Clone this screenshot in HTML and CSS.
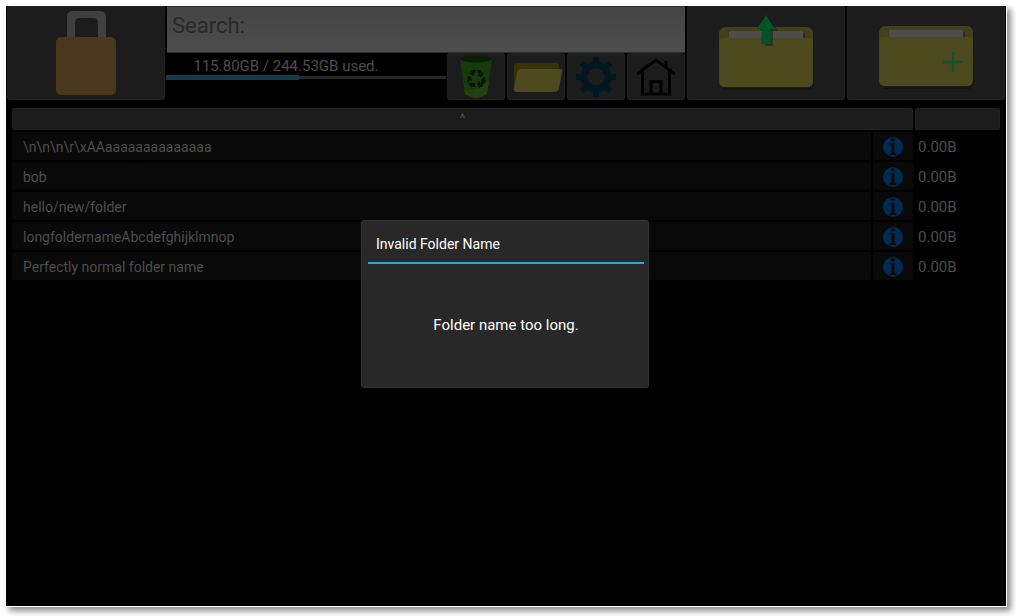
FILE: index.html
```html
<!DOCTYPE html>
<html lang="en">
<head>
<meta charset="utf-8">
<title>Folders</title>
<link rel="stylesheet" href="styles.css">
</head>
<body>
<svg class="defs" aria-hidden="true">
  <symbol id="info" viewBox="0 0 20 20">
    <circle cx="10" cy="10" r="10" fill="#002b52"/>
    <ellipse cx="9.800" cy="2.800" rx="2.200" ry="1.500" fill="#090909"/>
    <path d="M6.500 6H11.500V15.500Q11.500 16.500 13.500 16.500V18H6.500V16.500Q8.500 16.500 8.500 15.500V8.500Q8.500 7.500 6.500 7.500Z" fill="#090909"/>
  </symbol>
  <symbol id="folder" viewBox="0 0 100 66">
    <path d="M1 9Q1 1 8 1H89Q95 1 95 9V50H1Z" fill="#42401a"/>
    <path d="M11 5H85V18H11Z" fill="#4d4d4d"/>
    <path d="M85 7H87V13H85Z" fill="#302f17"/>
    <path d="M5 63H91Q96 61 96 55V20" fill="none" stroke="#151515" stroke-width="2"/>
    <path d="M1 17Q1 12 6 12H90Q95 12 95 17V55Q95 61 89 61H7Q1 61 1 55Z" fill="#4d491f"/>
  </symbol>
</svg>
<div class="window">
  <header class="toolbar">
    <button class="btn" aria-label="Lock">
      <svg width="60" height="86" viewBox="0 0 60 86">
        <path d="M11 30V7Q11 1 17 1H44Q50 1 50 7V30H42V13Q42 8 37 8H24Q19 8 19 13V30Z" fill="#404040"/>
        <rect y="27" width="60" height="58" rx="5" fill="#4b371c"/>
      </svg>
    </button>
    <div class="middle">
      <input class="search" type="text" placeholder="Search:" aria-label="Search">
      <div class="tools">
        <div class="usage">
          <span class="usage-text">115.80GB / 244.53GB used.</span>
          <div class="track"><div class="fill" style="width:47.4%"></div></div>
        </div>
        <button class="btn" aria-label="Recycle bin">
          <svg width="34" height="44" viewBox="0 0 34 44">
            <path d="M1 4L6 39Q17 46 28 39L33 4Z" fill="#173a0b"/>
            <path d="M5 35Q20 36 30 26L28 39Q17 46 6 39Z" fill="#21430f"/>
            <ellipse cx="17" cy="4" rx="16" ry="3.500" fill="#0a1e04"/>
            <g fill="#08130a">
              <path d="M13 15H17L14 21L10.500 19Z"/>
              <path d="M18 15H21L23 18L25 17L23 22L18 21L20 20Z"/>
              <path d="M22.500 24L26 22L27 26L25 28H22Z"/>
              <path d="M18 29L21 26V28H25L23 32H21V34Z"/>
              <path d="M11 28H16V32H12L10 30Z"/>
              <path d="M7 22L12 21L13 26L11.500 25L9.500 28L7.500 25L9 23Z"/>
            </g>
          </svg>
        </button>
        <button class="btn" aria-label="Open folder">
          <svg width="54" height="30" viewBox="-4 0 54 30">
            <path d="M1 4Q1 1 4 1H43Q46 1 46 4V24H1Z" fill="#353305"/>
            <path d="M4 10Q5 7 8 7H47Q50 7 49 10L46 26Q45 30 42 30H3Q0 30 1 26Z" fill="#4d4a1f"/>
          </svg>
        </button>
        <button class="btn" aria-label="Settings">
          <svg width="40" height="40" viewBox="-20 -20 40 40" fill="#021722">
            <g id="teeth">
              <path d="M-3-20H3V-12H-3ZM-3 20H3V12H-3ZM-20-3V3H-12V-3ZM20-3V3H12V-3Z"/>
            </g>
            <use href="#teeth" transform="rotate(45)"/>
            <circle r="12" fill="none" stroke="#021722" stroke-width="7"/>
          </svg>
        </button>
        <button class="btn" aria-label="Home">
          <svg width="40" height="38" viewBox="0 0 40 38" fill="none" stroke="#000" stroke-width="3">
            <path d="M1 16L20 2L39 16M30 9V3M6.500 13V36H33.500V13M15 36V23.500H25V36"/>
          </svg>
        </button>
      </div>
    </div>
    <button class="btn" aria-label="Parent folder">
      <svg width="96" height="78" viewBox="0 0 96 78">
        <use href="#folder" y="12" width="100" height="66"/>
        <path d="M50 3L60 17H55V32H47V17H42Z" fill="#171b12" opacity=".5"/>
        <path d="M48 1L57 15H52.500V30H43.500V15H39Z" fill="#005426"/>
      </svg>
    </button>
    <button class="btn" aria-label="New folder">
      <svg width="96" height="78" viewBox="0 0 96 78">
        <use href="#folder" y="11" width="100" height="66"/>
        <path d="M65 48H85M75 38V58" stroke="#15522c" stroke-width="2.400"/>
      </svg>
    </button>
  </header>
  <main class="content">
    <table class="files">
      <colgroup><col><col class="col-info"><col class="col-size"></colgroup>
      <thead>
        <tr><th colspan="2"><button class="btn sort">^</button></th><th><button class="btn sort" aria-label="Sort by size"></button></th></tr>
      </thead>
      <tbody>
        <tr><td><button class="row-btn name">\n\n\n\r\xAAaaaaaaaaaaaaaa</button></td><td><button class="row-btn" aria-label="Info"><svg width="20" height="20"><use href="#info"/></svg></button></td><td class="size">0.00B</td></tr>
        <tr><td><button class="row-btn name">bob</button></td><td><button class="row-btn" aria-label="Info"><svg width="20" height="20"><use href="#info"/></svg></button></td><td class="size">0.00B</td></tr>
        <tr><td><button class="row-btn name">hello/new/folder</button></td><td><button class="row-btn" aria-label="Info"><svg width="20" height="20"><use href="#info"/></svg></button></td><td class="size">0.00B</td></tr>
        <tr><td><button class="row-btn name">longfoldernameAbcdefghijklmnop</button></td><td><button class="row-btn" aria-label="Info"><svg width="20" height="20"><use href="#info"/></svg></button></td><td class="size">0.00B</td></tr>
        <tr><td><button class="row-btn name">Perfectly normal folder name</button></td><td><button class="row-btn" aria-label="Info"><svg width="20" height="20"><use href="#info"/></svg></button></td><td class="size">0.00B</td></tr>
      </tbody>
    </table>
  </main>
  <div class="overlay">
    <section class="popup" role="dialog" aria-labelledby="popup-title">
      <h1 class="popup-title" id="popup-title">Invalid Folder Name</h1>
      <p class="popup-text">Folder name too long.</p>
    </section>
  </div>
</div>
</body>
</html>
```
FILE: styles.css
```css
* {
  box-sizing: border-box;
}

body {
  margin: 0;
  padding: 5px 9px 9px 5px;
  min-height: 100vh;
  display: flex;
  background: #fff;
  font-family: Roboto, "Liberation Sans", sans-serif;
  font-size: 15px;
  color: #4d4d4d;
}

button,
input {
  font: inherit;
  color: inherit;
  margin: 0;
  padding: 0;
  border: 0;
}

svg {
  display: block;
}

.defs {
  position: absolute;
  width: 0;
  height: 0;
}

.window {
  position: relative;
  flex: 1;
  border: 1px solid #fff;
  background: #000 padding-box;
  box-shadow: 4px 4px 6px rgba(0, 0, 0, 0.45);
}

.btn {
  display: flex;
  align-items: center;
  justify-content: center;
  background: #1c1c1c;
  border: 1px solid #202020;
  border-radius: 2px;
}

.toolbar {
  display: grid;
  grid-template-columns: 158px 1fr 158px 158px;
  gap: 2px;
  height: 94px;
  padding: 0 1px;
}

.middle {
  display: flex;
  flex-direction: column;
}

.search {
  width: 100%;
  height: 47px;
  padding: 0 5px 8px;
  border: solid #2e2e2e;
  border-width: 1px 0;
  background: linear-gradient(#444, #4d4d4d);
  font-size: 22px;
}

.search::placeholder {
  color: #292929;
  opacity: 1;
}

.tools {
  flex: 1;
  display: grid;
  grid-template-columns: 1fr repeat(4, 58px);
  gap: 2px;
}

.usage {
  display: flex;
  flex-direction: column;
  margin: 0 -1px;
  padding-top: 4px;
}

.usage-text {
  padding-right: 40px;
  line-height: 18px;
  text-align: center;
}

.track {
  display: flex;
  align-items: center;
  height: 5px;
  background: linear-gradient(#292929, #292929) center / 100% 3px no-repeat;
}

.fill {
  height: 5px;
  background: #123c4d;
}

.content {
  padding: 7px 5px;
}

.files {
  width: 100%;
  table-layout: fixed;
  border-collapse: collapse;
}

.files th,
.files td {
  padding: 1px;
}

.col-info {
  width: 42px;
}

.col-size {
  width: 87px;
}

.sort {
  width: 100%;
  height: 22px;
  font-size: 12px;
}

.row-btn {
  display: flex;
  align-items: center;
  justify-content: center;
  width: 100%;
  height: 28px;
  padding-top: 2px;
  background: #090909;
  border-radius: 2px;
}

.name {
  justify-content: flex-start;
  padding-left: 11px;
  font-size: 14px;
}

.files .size {
  padding: 3px 0 1px 4px;
}

.overlay {
  position: absolute;
  inset: 0;
  display: flex;
  align-items: center;
  justify-content: center;
  padding: 0 2px 4px 0;
}

.popup {
  width: 288px;
  height: 168px;
  padding: 6px 4px 2px 6px;
  display: flex;
  flex-direction: column;
  background: #282828;
  border: 1px solid #333;
  border-radius: 3px;
  color: #fff;
}

.popup-title {
  margin: 0;
  padding: 0 8px;
  border-bottom: 2px solid #2fa7d4;
  font-size: 14px;
  font-weight: 400;
  line-height: 35px;
}

.popup-text {
  flex: 1;
  display: flex;
  align-items: center;
  justify-content: center;
  margin: 0;
  font-size: 15px;
}
```
